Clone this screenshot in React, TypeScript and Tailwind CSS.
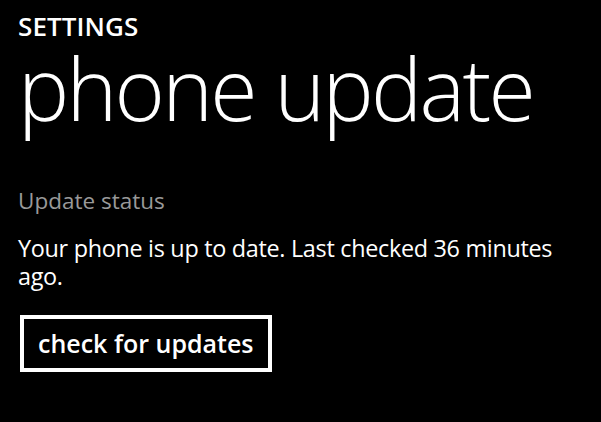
export default function App() {
  return (
    <div
      className="w-[601px] h-[422px] bg-black text-white overflow-hidden pl-[18px]"
      style={{ fontFamily: "'Open Sans', 'Noto Sans', sans-serif" }}
    >
      <div className="pt-[12px] text-[26px] leading-[28px] font-semibold tracking-[0.1px]">SETTINGS</div>
      <h1 className="mt-0 text-[86px] leading-[96px] font-light tracking-[-2.7px] whitespace-nowrap">
        phone update
      </h1>
      <div className="mt-[50px] text-[22.5px] leading-[30px] text-[#999999]">Update status</div>
      <p className="mt-[18px] w-[570px] text-[23.4px] leading-[28px] tracking-[-0.3px]">
        Your phone is up to date. Last checked 36 minutes ago.
      </p>
      <button className="mt-[25px] ml-[2px] h-[57px] px-[14px] border-[4px] border-white text-[25px] font-semibold leading-none">
        check for updates
      </button>
    </div>
  );
}
